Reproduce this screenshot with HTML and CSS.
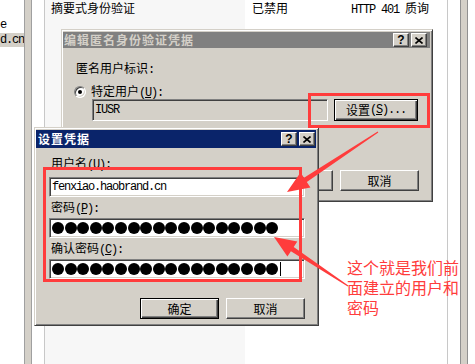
FILE: index.html
```html
<!DOCTYPE html>
<html>
<head>
<meta charset="utf-8">
<title>设置凭据</title>
<link rel="stylesheet" href="styles.css">
</head>
<body>
<div class="desk">
  <div class="tree">
    <div class="node">e</div>
    <div class="node sel">d.cn</div>
  </div>
  <div class="splitter"></div>
  <div class="gap"></div>
  <div class="list">
    <div class="c1"><div class="cell">摘要式身份验证</div></div>
    <div class="c2"><div class="cell"><span>已禁用</span><span><span class="a">HTTP 401 </span>质询</span></div></div>
  </div>
  <div class="gap2"></div>
  <div class="scroll"></div>
  <div class="rest"></div>
</div>

<div class="win win1">
  <div class="title">
    <span>编辑匿名身份验证凭据</span>
    <div class="tbtns">
      <span class="tbtn">?</span>
      <span class="tbtn"><svg width="8" height="7" viewBox="0 0 8 7"><path d="M0.5 0.5 L7.5 6.5 M7.5 0.5 L0.5 6.5" stroke="#000" stroke-width="1.6" fill="none"/></svg></span>
    </div>
  </div>
  <div class="w1-lbl">匿名用户标识<span class="a">:</span></div>
  <div class="w1-radio"><span class="radio"></span><span>特定用户<span class="a">(<u>U</u>):</span></span></div>
  <div class="w1-user">
    <div class="field ro w1-field"><span class="a">IUSR</span></div>
    <div class="btn def w1-set">设置<span class="a">(<u>S</u>)...</span></div>
  </div>
  <div class="btns w1-btns">
    <div class="btn">确定</div>
    <div class="btn">取消</div>
  </div>
</div>

<div class="win win2">
  <div class="title">
    <span>设置凭据</span>
    <div class="tbtns">
      <span class="tbtn">?</span>
      <span class="tbtn"><svg width="8" height="7" viewBox="0 0 8 7"><path d="M0.5 0.5 L7.5 6.5 M7.5 0.5 L0.5 6.5" stroke="#000" stroke-width="1.6" fill="none"/></svg></span>
    </div>
  </div>
  <div class="w2-lbl first">用户名<span class="a">(<u>U</u>):</span></div>
  <div class="field w2-field"><span class="a">fenxiao.haobrand.cn</span></div>
  <div class="w2-lbl">密码<span class="a">(<u>P</u>):</span></div>
  <div class="field w2-field">
    <div class="dots"><i></i><i></i><i></i><i></i><i></i><i></i><i></i><i></i><i></i><i></i><i></i><i></i><i></i><i></i><i></i><i></i><i></i><i></i></div>
  </div>
  <div class="w2-lbl">确认密码<span class="a">(<u>C</u>):</span></div>
  <div class="field w2-field">
    <div class="dots"><i></i><i></i><i></i><i></i><i></i><i></i><i></i><i></i><i></i><i></i><i></i><i></i><i></i><i></i><i></i><i></i><i></i><i></i></div>
    <span class="caret"></span>
  </div>
  <div class="btns w2-btns">
    <div class="btn def">确定</div>
    <div class="btn">取消</div>
  </div>
</div>

<div class="mark mark1"></div>
<div class="mark mark2"></div>

<svg class="arrows" width="475" height="364" viewBox="0 0 475 364">
  <polygon points="287,192 310.4,187.4 306.8,182.0 378.3,132.4 377.7,131.6 304.0,177.8 300.5,172.4"/>
  <polygon points="274,237 287.4,256.6 290.9,251.2 347.7,286.4 348.3,285.6 293.7,247.0 297.3,241.6"/>
</svg>

<div class="note">这个就是我们前面建立的用户和密码</div>
</body>
</html>
```

FILE: styles.css
```css
* { box-sizing: border-box; }
html, body { margin: 0; padding: 0; }
body {
  width: 475px;
  height: 364px;
  overflow: hidden;
  position: relative;
  background: #fff;
  color: #000;
  font-family: "Noto Sans CJK SC", "Liberation Sans", sans-serif;
  font-size: 12px;
  line-height: 14px;
}
u { text-decoration: underline; text-underline-offset: 1px; }
.a {
  font-family: "Liberation Mono", "Noto Sans CJK SC", monospace;
  letter-spacing: -1.2px;
}

/* background list view */
.desk { display: flex; height: 364px; }
.tree { width: 24px; padding-top: 18px; overflow: hidden; white-space: nowrap; }
.node {
  height: 14px;
  font-family: "Liberation Mono", monospace;
  letter-spacing: -1.2px;
}
.node.sel { margin-top: 1px; background: #d4d0c8; }
.splitter { width: 8px; background: #d4d0c8; border-left: 1px solid #a0a0a0; border-right: 1px solid #a0a0a0; }
.gap { width: 12px; }
.list { display: flex; border-left: 1px solid #c8c8c8; border-right: 1px solid #c8c8c8; }
.c1 { width: 200px; background: #f7f7f7; }
.c2 { width: 202px; }
.cell { padding: 1px 0 0 6px; white-space: nowrap; }
.c2 .cell { display: grid; grid-template-columns: 99px auto; padding-left: 7px; }
.gap2 { width: 12px; }
.scroll { width: 8px; background: #d4d0c8; border-left: 1px solid #909090; border-right: 1px solid #909090; }
.rest { width: 7px; }

/* windows */
.win {
  position: absolute;
  display: flex;
  flex-direction: column;
  background: #d4d0c8;
  border: 1px solid;
  border-color: #d4d0c8 #404040 #404040 #d4d0c8;
  box-shadow: inset 1px 1px #fff, inset -1px -1px #808080;
  padding: 2px 2px 2px 1px;
}
.win1 { left: 61px; top: 29px; width: 372px; height: 173px; }
.win2 { left: 34px; top: 127px; width: 285px; height: 199px; }

.title {
  display: flex;
  align-items: center;
  justify-content: space-between;
  font-weight: bold;
  letter-spacing: 1px;
  white-space: nowrap;
}
.win1 .title { height: 16px; background: #808080; color: #d4d0c8; padding: 0 3px 0 1px; }
.win2 .title { height: 18px; background: #0a246a; color: #fff; padding: 0 1px 0 2px; }
.tbtns { display: flex; gap: 2px; }
.tbtn {
  width: 16px;
  height: 14px;
  display: flex;
  align-items: center;
  justify-content: center;
  background: #d4d0c8;
  border: 1px solid;
  border-color: #fff #404040 #404040 #fff;
  box-shadow: inset -1px -1px #808080;
  color: #000;
  font-family: "Liberation Sans", sans-serif;
  font-size: 12px;
  font-weight: bold;
  letter-spacing: 0;
  line-height: 12px;
}

/* controls */
.field {
  display: flex;
  align-items: center;
  background: #fff;
  border: 1px solid;
  border-color: #808080 #fff #fff #808080;
  box-shadow: inset 1px 1px #404040, inset -1px -1px #d4d0c8;
  padding-left: 2px;
  white-space: nowrap;
}
.field.ro { background: #d4d0c8; }
.btn {
  display: flex;
  align-items: center;
  justify-content: center;
  width: 79px;
  height: 21px;
  background: #d4d0c8;
  border: 1px solid;
  border-color: #fff #404040 #404040 #fff;
  box-shadow: inset -1px -1px #808080;
  white-space: nowrap;
}
.btn.def {
  border-color: #000;
  box-shadow: inset 1px 1px #fff, inset -1px -1px #404040, inset -2px -2px #808080;
}
.btns { display: flex; justify-content: flex-end; gap: 7px; }
.radio {
  position: relative;
  width: 12px;
  height: 12px;
  border-radius: 50%;
  background: #fff;
  border: 1px solid;
  border-color: #808080 #fff #fff #808080;
  box-shadow: inset 1px 1px #404040, inset -1px -1px #d4d0c8;
}
.radio::after {
  content: "";
  position: absolute;
  left: 3px;
  top: 3px;
  width: 4px;
  height: 4px;
  border-radius: 50%;
  background: #000;
}

/* dialog 1 layout */
.w1-lbl { margin: 13px 0 0 13px; }
.w1-radio { margin: 8px 0 0 11px; height: 14px; display: flex; align-items: center; gap: 5px; }
.w1-user { margin-left: 29px; display: flex; gap: 6px; }
.w1-field { width: 236px; height: 22px; }
.w1-set { width: 84px; height: 22px; }
.w1-btns { margin: 49px 11px 0 0; }

/* dialog 2 layout */
.w2-lbl { margin: 3px 0 0 15px; }
.w2-lbl.first { margin-top: 8px; }
.w2-field { margin: 2px 0 0 13px; width: 256px; height: 20px; }
.w2-lbl.first + .w2-field { margin-top: 5px; }
.w2-btns { margin: 19px 11px 0 0; }
.dots { display: flex; gap: 0.6px; }
.dots i { display: block; width: 12px; height: 12px; border-radius: 50%; background: #000; }
.caret { width: 1px; height: 14px; background: #000; margin-left: 2px; }

/* annotations */
.mark { position: absolute; border: 3px solid #ff3c3c; }
.mark1 { left: 308px; top: 93px; width: 122px; height: 35px; }
.mark2 { left: 43px; top: 167px; width: 259px; height: 115px; }
.arrows { position: absolute; left: 0; top: 0; pointer-events: none; }
.arrows polygon { fill: #ff3c3c; }
.note {
  position: absolute;
  left: 347px;
  top: 257px;
  width: 112px;
  color: #ff3c3c;
  font-size: 16px;
  line-height: 20px;
}
```
